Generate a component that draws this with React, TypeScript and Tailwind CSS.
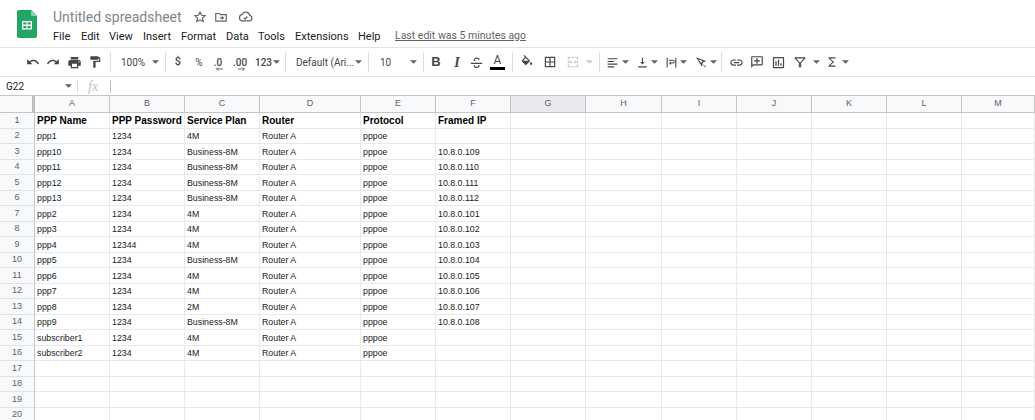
import React from "react";

const P: Record<string, string> = {
  undo: "M12.5 8c-2.65 0-5.05.99-6.9 2.6L2 7v9h9l-3.62-3.62c1.39-1.16 3.16-1.88 5.12-1.88 3.54 0 6.55 2.31 7.6 5.5l2.37-.78C21.08 11.03 17.15 8 12.5 8z",
  redo: "M18.4 10.6C16.55 8.99 14.15 8 11.5 8c-4.65 0-8.58 3.03-9.96 7.22L3.9 16c1.05-3.19 4.05-5.5 7.6-5.5 1.95 0 3.73.72 5.12 1.88L13 16h9V7l-3.6 3.6z",
  print: "M19 8H5c-1.66 0-3 1.34-3 3v6h4v4h12v-4h4v-6c0-1.66-1.34-3-3-3zm-3 11H8v-5h8v5zm3-7c-.55 0-1-.45-1-1s.45-1 1-1 1 .45 1 1-.45 1-1 1zm-1-9H6v4h12V3z",
  paint: "M18 4V3c0-.55-.45-1-1-1H5c-.55 0-1 .45-1 1v4c0 .55.45 1 1 1h12c.55 0 1-.45 1-1V6h1v4H9v11c0 .55.45 1 1 1h2c.55 0 1-.45 1-1v-9h8V4h-3z",
  fill: "M16.56 8.94L7.62 0 6.21 1.41l2.38 2.38-5.15 5.15c-.59.59-.59 1.54 0 2.12l5.5 5.5c.29.29.68.44 1.06.44s.77-.15 1.06-.44l5.5-5.5c.59-.58.59-1.53 0-2.12zM5.21 10L10 5.21 14.79 10H5.21zM19 11.5s-2 2.17-2 3.5c0 1.1.9 2 2 2s2-.9 2-2c0-1.33-2-3.5-2-3.5z",
  borders: "M3 3v18h18V3H3zm8 16H5v-6h6v6zm0-8H5V5h6v6zm8 8h-6v-6h6v6zm0-8h-6V5h6v6z",
  merge: "M3 3h5v2H5v3H3zM10 3h4v2h-4zM16 3h5v5h-2V5h-3zM3 10h2v1h3V9l3 3-3 3v-2H5v1H3zM21 10v4h-2v-1h-3v2l-3-3 3-3v2h3v-1zM3 16h2v3h3v2H3zM10 19h4v2h-4zM19 16h2v5h-5v-2h3z",
  link: "M3.9 12c0-1.71 1.39-3.1 3.1-3.1h4V7H7c-2.76 0-5 2.24-5 5s2.24 5 5 5h4v-1.9H7c-1.71 0-3.1-1.39-3.1-3.1zM8 13h8v-2H8v2zm9-6h-4v1.9h4c1.71 0 3.1 1.39 3.1 3.1s-1.39 3.1-3.1 3.1h-4V17h4c2.76 0 5-2.24 5-5s-2.24-5-5-5z",
  comment: "M20 2H4c-1.1 0-2 .9-2 2v18l4-4h14c1.1 0 2-.9 2-2V4c0-1.1-.9-2-2-2zm0 14H5.17L4 17.17V4h16v12zM13 5h-2v4H7v2h4v4h2v-4h4V9h-4V5z",
  chart: "M19 3H5c-1.1 0-2 .9-2 2v14c0 1.1.9 2 2 2h14c1.1 0 2-.9 2-2V5c0-1.1-.9-2-2-2zm0 16H5V5h14v14zM7 10h2v7H7zm4-3h2v10h-2zm4 6h2v4h-2z",
  sigma: "M18 4H6v1.6L13 12l-7 6.4V20h12v-1.8H8.8L15.6 12 8.8 5.8H18z",
  filter: "M3 4h18v1.8l-7 8V21h-4v-7.2l-7-8zm2.6 1.8L11.8 13v6h.4v-6l6.2-7.2z",
  strike: "M3 12.5h18v1.8H3zM7.5 9.5C7.5 6 10 4 12.5 4c2.4 0 4.2 1.3 4.8 3.3l-2 .6c-.4-1.2-1.4-1.9-2.8-1.9-1.5 0-2.7.9-2.7 2.2 0 .6.2 1 .5 1.3H7.8c-.2-.3-.3-.6-.3-1zM14.6 16h2.3c.1.3.1.6.1.9 0 2.3-2 3.9-4.6 3.9-2.7 0-4.7-1.4-5.3-3.7l2-.6c.4 1.5 1.7 2.4 3.3 2.4 1.5 0 2.6-.8 2.6-2 0-.3-.1-.6-.4-.9z",
  valign: "M4 19h16v2H4zM11 3h2v8h3l-4 4.500L8 11h3z",
  halign: "M3 4h18v2H3zM3 9h12v2H3zM3 14h18v2H3zM3 19h12v2H3z",
  wrap: "M3 3h2v18H3zM19 3h2v18h-2zM7 7h7.500a3.500 3.500 0 0 1 0 7H11v2.500L7.500 13.200 11 10v2.200h3.500a1.700 1.700 0 0 0 0-3.400H7z",
  rotate: "M3.500 4l17 6.200-1 1.900-2.300-.9-3.600 4.700 1.200 2.200-1.800 1zM7 7.200l5.500 6.400 2.400-3.200zM14 14.600l6.500 5.400-1.300 1.300z",
};

function Ic({ n, s = 16, c = "#444746" }: { n: string; s?: number; c?: string }) {
  return (
    <svg viewBox="0 0 24 24" width={s} height={s} fill={c} className="shrink-0">
      <path d={P[n]} fillRule="evenodd" />
    </svg>
  );
}

function Caret({ c = "#5f6368" }: { c?: string }) {
  return (
    <svg viewBox="0 0 8 4" width="7" height="4" className="shrink-0">
      <path d="M0 0h8L4 4z" fill={c} />
    </svg>
  );
}

const Sep = () => <div className="w-px h-[20px] bg-[#dadce0] shrink-0" />;

function Logo() {
  return (
    <svg viewBox="0 0 20 28" width="20" height="28">
      <path d="M2 0h12.500L20 6v20a2 2 0 0 1-2 2H2a2 2 0 0 1-2-2V2a2 2 0 0 1 2-2z" fill="#23a566" />
      <path d="M14 0v4.500A1.500 1.500 0 0 0 15.500 6H20z" fill="#8ed1b1" />
      <path d="M5 11h10v8.500H5zM6.300 12.300v2.300h3.100v-2.300zm4.300 0v2.300h3.100v-2.300zM6.300 15.900v2.300h3.100v-2.300zm4.300 0v2.300h3.100v-2.300z" fill="#fff" fillRule="evenodd" />
    </svg>
  );
}

const menus: [string, string][] = [
  ["File", "w-[28px]"],
  ["Edit", "w-[28px]"],
  ["View", "w-[34px]"],
  ["Insert", "w-[38px]"],
  ["Format", "w-[45px]"],
  ["Data", "w-[32px]"],
  ["Tools", "w-[37px]"],
  ["Extensions", "w-[63px]"],
  ["Help", "w-[37px]"],
];

const colCls = "grid-cols-[35px_75px_75px_75px_101px_75px_75px_75px_76px_75px_75px_75px_75px_73px]";
const letters = ["A", "B", "C", "D", "E", "F", "G", "H", "I", "J", "K", "L", "M"];

const rows: string[][] = [
  ["PPP Name", "PPP Password", "Service Plan", "Router", "Protocol", "Framed IP"],
  ["ppp1", "1234", "4M", "Router A", "pppoe", ""],
  ["ppp10", "1234", "Business-8M", "Router A", "pppoe", "10.8.0.109"],
  ["ppp11", "1234", "Business-8M", "Router A", "pppoe", "10.8.0.110"],
  ["ppp12", "1234", "Business-8M", "Router A", "pppoe", "10.8.0.111"],
  ["ppp13", "1234", "Business-8M", "Router A", "pppoe", "10.8.0.112"],
  ["ppp2", "1234", "4M", "Router A", "pppoe", "10.8.0.101"],
  ["ppp3", "1234", "4M", "Router A", "pppoe", "10.8.0.102"],
  ["ppp4", "12344", "4M", "Router A", "pppoe", "10.8.0.103"],
  ["ppp5", "1234", "Business-8M", "Router A", "pppoe", "10.8.0.104"],
  ["ppp6", "1234", "4M", "Router A", "pppoe", "10.8.0.105"],
  ["ppp7", "1234", "4M", "Router A", "pppoe", "10.8.0.106"],
  ["ppp8", "1234", "2M", "Router A", "pppoe", "10.8.0.107"],
  ["ppp9", "1234", "Business-8M", "Router A", "pppoe", "10.8.0.108"],
  ["subscriber1", "1234", "4M", "Router A", "pppoe", ""],
  ["subscriber2", "1234", "4M", "Router A", "pppoe", ""],
  [],
  [],
  [],
  [],
];

export default function App() {
  return (
    <div className="w-[1035px] h-[420px] overflow-hidden bg-white font-['Roboto',sans-serif] flex flex-col text-[#3c4043]">
      {/* title + menus */}
      <div className="h-[47px] shrink-0 flex">
        <div className="w-[53px] shrink-0 pl-[17px] pt-[10px]">
          <Logo />
        </div>
        <div className="flex flex-col">
          <div className="h-[27px] pt-[6px] flex items-center">
            <span className="w-[140px] text-[14px] text-[#80868b] leading-none">Untitled spreadsheet</span>
            <div className="w-[14px] flex justify-center">
              <svg viewBox="0 0 24 24" width="14" height="14" fill="none" stroke="#5f6368" strokeWidth="2"><path d="M12 3.500l2.600 5.600 6.100.7-4.500 4.100 1.200 6-5.400-3-5.400 3 1.200-6-4.500-4.100 6.100-.7z" /></svg>
            </div>
            <div className="w-[28px] flex justify-center">
              <svg viewBox="0 0 24 24" width="14" height="14" fill="none" stroke="#5f6368" strokeWidth="2"><path d="M3 6h6l2 2h10v11H3z" /><path d="M10 13.500h6M13.500 11l2.500 2.500-2.500 2.500" /></svg>
            </div>
            <div className="w-[20px] flex justify-center">
              <svg viewBox="0 0 24 24" width="15" height="15" fill="none" stroke="#5f6368" strokeWidth="2"><path d="M7 19a5 5 0 0 1-.6-9.900A6.500 6.500 0 0 1 18.700 10.100A4.500 4.500 0 0 1 18 19z" /><path d="M9.500 14l2 2 3.500-4" /></svg>
            </div>
          </div>
          <div className="flex items-center h-[16px] mt-[1px] text-[11px] text-[#202124] leading-none">
            {menus.map(([m, w]) => (
              <span key={m} className={w}>{m}</span>
            ))}
            <span className="text-[#5f6368] underline text-[10.500px]">Last edit was 5 minutes ago</span>
          </div>
        </div>
      </div>

      {/* toolbar */}
      <div className="h-[30px] shrink-0 border-y border-[#e0e2e3] flex items-center pl-[23px] text-[10px] text-[#444746]">
        <div className="w-[20px] flex justify-center"><Ic n="undo" s={14} /></div>
        <div className="w-[20px] flex justify-center"><Ic n="redo" s={14} /></div>
        <div className="w-[22px] flex justify-center"><Ic n="print" s={15} /></div>
        <div className="w-[20px] flex justify-center"><Ic n="paint" s={14} /></div>
        <div className="w-[5px]" />
        <Sep />
        <span className="ml-[10px] w-[31px] text-[10px]">100%</span>
        <Caret />
        <div className="w-[6px]" />
        <Sep />
        <span className="w-[24px] text-center font-medium text-[11px]">$</span>
        <span className="w-[18px] text-center text-[10px]">%</span>
        <span className="w-[20px] text-center relative font-medium text-[10px]">
          .0
          <svg viewBox="0 0 10 5" width="8" height="4" className="absolute left-[7px] top-[12px]"><path d="M10 2.500H2M4 .5L2 2.500l2 2" fill="none" stroke="#444746" strokeWidth="1" /></svg>
        </span>
        <span className="w-[24px] text-center relative font-medium text-[10px]">
          .00
          <svg viewBox="0 0 10 5" width="8" height="4" className="absolute left-[10px] top-[12px]"><path d="M0 2.500h8M6 .5l2 2-2 2" fill="none" stroke="#444746" strokeWidth="1" /></svg>
        </span>
        <span className="w-[20px] pl-[3px] text-[10px] font-medium">123</span>
        <div className="w-[1px]" />
        <Caret />
        <div className="w-[5px]" />
        <Sep />
        <span className="ml-[10px] w-[59px] text-[10px] whitespace-nowrap">Default (Ari...</span>
        <Caret />
        <div className="w-[6px]" />
        <Sep />
        <span className="ml-[11px] w-[30px] text-[10px]">10</span>
        <Caret />
        <div className="w-[6px]" />
        <Sep />
        <div className="w-[7px]" />
        <div className="w-[10px] flex justify-center font-['Liberation_Sans',sans-serif] font-bold text-[13px] text-[#444746]">B</div>
        <div className="w-[11px]" />
        <div className="w-[10px] flex justify-center font-['Liberation_Serif',serif] italic font-bold text-[14px] text-[#444746]">I</div>
        <div className="w-[6px]" />
        <div className="w-[16px] flex justify-center"><Ic n="strike" s={15} /></div>
        <div className="w-[5px]" />
        <div className="w-[17px] flex flex-col items-center">
          <span className="text-[12px] leading-[12px] text-[#444746]">A</span>
          <div className="w-[15px] h-[3px] bg-black mt-[1px]" />
        </div>
        <div className="w-[6px]" />
        <Sep />
        <div className="w-[4px]" />
        <div className="w-[20px] flex justify-center"><Ic n="fill" s={14} /></div>
        <div className="w-[3px]" />
        <div className="w-[20px] flex justify-center"><Ic n="borders" s={14} /></div>
        <div className="w-[3px]" />
        <div className="w-[20px] flex justify-center"><Ic n="merge" s={14} c="#c8cacc" /></div>
        <div className="w-[3px]" />
        <Caret c="#c8cacc" />
        <div className="w-[6px]" />
        <Sep />
        <div className="w-[5px]" />
        <div className="w-[14px] flex justify-center"><Ic n="halign" s={13} /></div>
        <div className="w-[3px]" />
        <Caret />
        <div className="w-[6px]" />
        <div className="w-[14px] flex justify-center"><Ic n="valign" s={13} /></div>
        <div className="w-[2px]" />
        <Caret />
        <div className="w-[6px]" />
        <div className="w-[14px] flex justify-center"><Ic n="wrap" s={13} /></div>
        <div className="w-[2px]" />
        <Caret />
        <div className="w-[6px]" />
        <div className="w-[15px] flex justify-center"><Ic n="rotate" s={14} /></div>
        <div className="w-[2px]" />
        <Caret />
        <div className="w-[4px]" />
        <Sep />
        <div className="w-[5px]" />
        <div className="w-[18px] flex justify-center"><Ic n="link" s={15} /></div>
        <div className="w-[3px]" />
        <div className="w-[18px] flex justify-center"><Ic n="comment" s={14} /></div>
        <div className="w-[3px]" />
        <div className="w-[18px] flex justify-center"><Ic n="chart" s={15} /></div>
        <div className="w-[4px]" />
        <div className="w-[18px] flex justify-center"><Ic n="filter" s={14} /></div>
        <div className="w-[4px]" />
        <Caret />
        <div className="w-[4px]" />
        <div className="w-[16px] flex justify-center"><Ic n="sigma" s={14} /></div>
        <div className="w-[2px]" />
        <Caret />
      </div>

      {/* formula bar */}
      <div className="h-[18px] shrink-0 flex items-center text-[10px] text-[#202124]">
        <span className="w-[65px] pl-[6px]">G22</span>
        <Caret />
        <div className="w-[5px]" />
        <div className="w-px h-[13px] bg-[#dadce0]" />
        <span className="w-[32px] pl-[10px] font-['Liberation_Serif',serif] italic text-[14px] text-[#bdc1c6]">fx</span>
        <div className="w-px h-[13px] bg-[#bdc1c6]" />
      </div>

      {/* sheet */}
      <div className={`grid ${colCls} auto-rows-[15.5px] font-['Liberation_Sans',sans-serif] text-[#202124]`}>
        <div className="h-[18px] bg-[#f8f9fa] border-y border-[#c4c7c5] border-r-[3px] border-r-[#bdbfc1]" />
        {letters.map((l) => (
          <div
            key={l}
            className={`h-[18px] flex items-center justify-center text-[9px] text-[#5f6368] border-y border-r border-[#c4c7c5] ${l === "G" ? "bg-[#e8eaed]" : "bg-[#f8f9fa]"}`}
          >
            {l}
          </div>
        ))}
        {rows.map((r, i) => (
          <React.Fragment key={i}>
            <div className="relative top-[2.500px] flex items-center justify-center text-[9px] text-[#5f6368] bg-[#f8f9fa] border-r border-b border-r-[#c4c7c5] border-b-[#e0e2e3]">
              {i + 1}
            </div>
            {letters.map((_, j) => (
              <div
                key={j}
                className={`relative top-[2.500px] flex items-center pl-[2px] whitespace-nowrap overflow-hidden border-r border-b border-[#e8e9ea] ${i === 0 ? "font-bold text-[10px] text-black" : "pt-[2px] text-[8.800px]"}`}
              >
                {r[j] ?? ""}
              </div>
            ))}
          </React.Fragment>
        ))}
      </div>
    </div>
  );
}
